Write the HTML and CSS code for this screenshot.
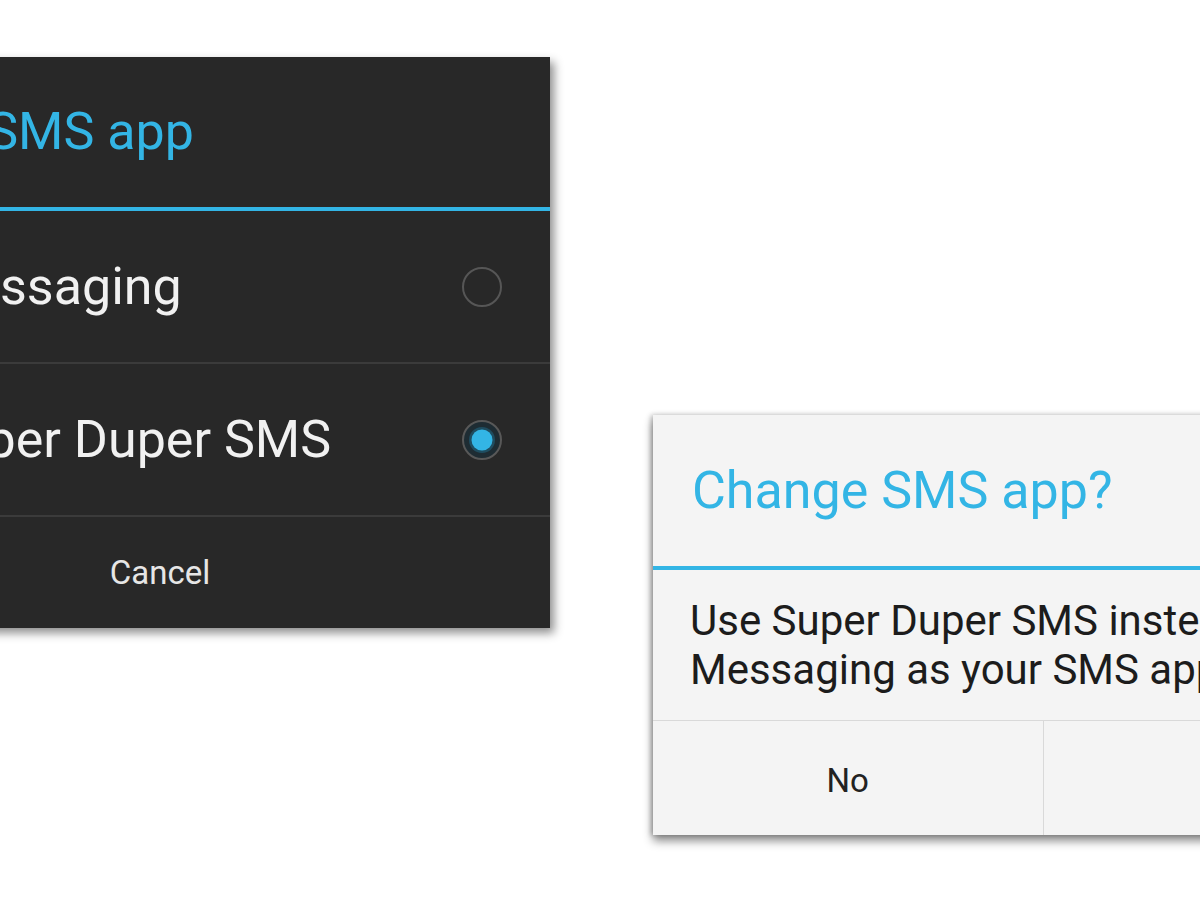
FILE: index.html
```html
<!DOCTYPE html>
<html lang="en">
<head>
<meta charset="utf-8">
<title>Change SMS app</title>
<link rel="stylesheet" href="styles.css">
</head>
<body>
<div class="stage">
  <section class="dialog dialog--dark">
    <h1 class="dialog-title">Change SMS app</h1>
    <div class="rule"></div>
    <ul class="options">
      <li class="option">
        <span class="app-icon"></span>
        <span class="option-label">Messaging</span>
        <svg class="radio" width="44" height="44" viewBox="0 0 44 44"><circle cx="22" cy="22" r="19" fill="none" stroke="#565656" stroke-width="2"/></svg>
      </li>
      <li class="option">
        <span class="app-icon"></span>
        <span class="option-label">Super Duper SMS</span>
        <svg class="radio" width="44" height="44" viewBox="0 0 44 44"><circle cx="22" cy="22" r="19" fill="#1e2c33" stroke="#585858" stroke-width="2"/><circle cx="22" cy="22" r="13" fill="#1f4d60"/><circle cx="22" cy="22" r="10.5" fill="#33b5e5"/></svg>
      </li>
    </ul>
    <div class="dark-actions"><button class="btn btn--dark">Cancel</button></div>
  </section>

  <section class="dialog dialog--light">
    <h1 class="dialog-title">Change SMS app?</h1>
    <div class="rule"></div>
    <p class="message">Use Super Duper SMS instead of Messaging as your SMS app?</p>
    <div class="light-actions">
      <button class="btn btn--light">No</button>
      <button class="btn btn--light btn--split">Yes</button>
    </div>
  </section>
</div>
</body>
</html>
```
FILE: styles.css
```css
html, body {
  margin: 0;
  padding: 0;
  background: #ffffff;
  overflow: hidden;
}

.stage {
  width: 1200px;
  height: 900px;
  overflow: hidden;
  display: flex;
  align-items: flex-start;
  font-family: Roboto, "Liberation Sans", sans-serif;
}

.dialog {
  flex: none;
  width: 780px;
}

.dialog-title {
  margin: 0;
  height: 150px;
  display: flex;
  align-items: center;
  padding-left: 40px;
  font-size: 52px;
  font-weight: 400;
  line-height: 1;
  color: #33b5e5;
}

.rule {
  height: 4px;
  background: #33b5e5;
}

/* dark chooser */
.dialog--dark {
  margin-top: 57px;
  margin-left: -230px;
  background: #282828;
  box-shadow: 4px 5px 9px rgba(0, 0, 0, 0.45);
}

.dialog--dark .dialog-title {
  padding-left: 28px;
}

.options {
  list-style: none;
  margin: 0;
  padding: 0;
}

.option {
  height: 151px;
  display: flex;
  align-items: center;
  padding: 0 46px 0 40px;
  border-bottom: 2px solid #3b3b3b;
  font-size: 52px;
  line-height: 1;
  color: #f1f1f1;
}

.app-icon {
  flex: none;
  width: 72px;
  height: 72px;
  margin-right: 45px;
  border-radius: 10px;
  background: #3a3a3a;
}

.option-label {
  flex: 1;
}

.radio {
  flex: none;
  display: block;
}

.dark-actions {
  height: 111px;
  display: flex;
}

.btn {
  flex: 1;
  border: 0;
  margin: 0;
  padding: 0;
  background: transparent;
  font-family: Roboto, "Liberation Sans", sans-serif;
  font-size: 33px;
  line-height: 1;
}

.btn--dark {
  color: #e6e6e6;
}

/* light confirmation */
.dialog--light {
  margin-top: 415px;
  margin-left: 103px;
  background: #f4f4f4;
  box-shadow: 0 6px 9px rgba(0, 0, 0, 0.45), -2px 0 5px rgba(0, 0, 0, 0.25);
}

.dialog--light .dialog-title {
  height: 151px;
  padding-left: 39px;
}

.message {
  margin: 0;
  height: 150px;
  box-sizing: border-box;
  display: flex;
  align-items: center;
  padding: 0 40px 0 37px;
  font-size: 42px;
  line-height: 49px;
  color: #1c1c1c;
}

.light-actions {
  height: 114px;
  display: flex;
  border-top: 1px solid #d9d9d9;
}

.btn--light {
  color: #222222;
  padding-top: 4px;
}

.btn--split {
  border-left: 1px solid #d9d9d9;
}
```
